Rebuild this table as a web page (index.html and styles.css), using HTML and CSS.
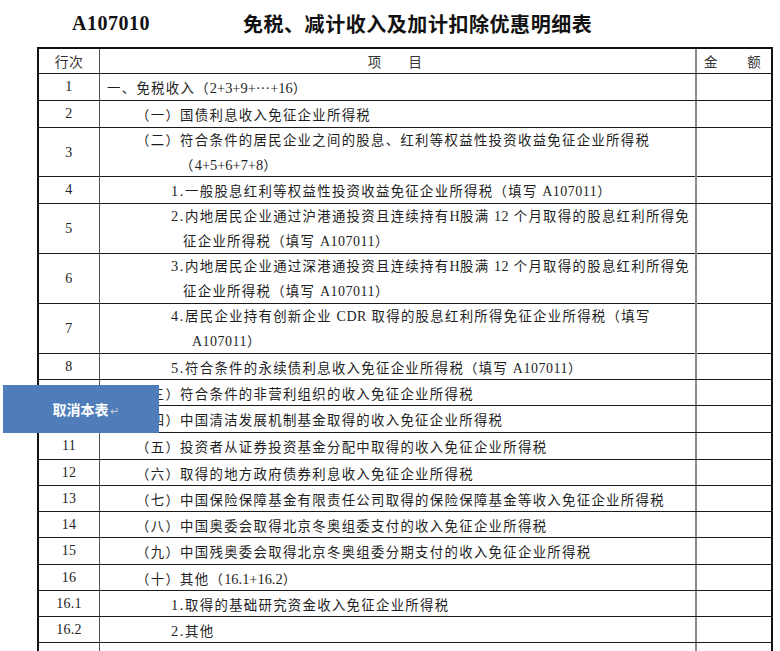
FILE: index.html
```html
<!DOCTYPE html>
<html lang="zh-CN">
<head>
<meta charset="utf-8">
<title>A107010</title>
<link rel="stylesheet" href="styles.css">
</head>
<body>
<div class="page">
  <header class="head">
    <span class="code">A107010</span>
    <h1 class="title">免税、减计收入及加计扣除优惠明细表</h1>
  </header>

  <div class="sheet" role="table">
    <div class="row hd h25" role="row">
      <div class="cell no">行次</div>
      <div class="cell item-h"><span>项</span><span>目</span></div>
      <div class="cell amt-h"><span>金</span><span>额</span></div>
    </div>
    <div class="row h27"><div class="cell no">1</div><div class="cell item l1"><span>一、免税收入（<span class="n">2+3+9+···+16</span>）</span></div><div class="cell amt"></div></div>
    <div class="row h27"><div class="cell no">2</div><div class="cell item l2"><span>（一）国债利息收入免征企业所得税</span></div><div class="cell amt"></div></div>
    <div class="row h49"><div class="cell no">3</div><div class="cell item l2 two"><span>（二）符合条件的居民企业之间的股息、红利等权益性投资收益免征企业所得税</span><span class="c3">（<span class="n">4+5+6+7+8</span>）</span></div><div class="cell amt"></div></div>
    <div class="row h27"><div class="cell no">4</div><div class="cell item l3"><span><span class="k">1.</span>一般股息红利等权益性投资收益免征企业所得税（填写 <span class="a">A107011</span>）</span></div><div class="cell amt"></div></div>
    <div class="row h50"><div class="cell no">5</div><div class="cell item l3 two"><span><span class="k">2.</span>内地居民企业通过沪港通投资且连续持有<span class="a">H</span>股满 <span class="a">12</span> 个月取得的股息红利所得免</span><span class="c5">征企业所得税（填写 <span class="a">A107011</span>）</span></div><div class="cell amt"></div></div>
    <div class="row h50"><div class="cell no">6</div><div class="cell item l3 two"><span><span class="k">3.</span>内地居民企业通过深港通投资且连续持有<span class="a">H</span>股满 <span class="a">12</span> 个月取得的股息红利所得免</span><span class="c5">征企业所得税（填写 <span class="a">A107011</span>）</span></div><div class="cell amt"></div></div>
    <div class="row h50"><div class="cell no">7</div><div class="cell item l3 two"><span><span class="k">4.</span>居民企业持有创新企业 <span class="a">CDR</span> 取得的股息红利所得免征企业所得税（填写</span><span class="c7"><span class="a">A107011</span>）</span></div><div class="cell amt"></div></div>
    <div class="row h26"><div class="cell no">8</div><div class="cell item l3"><span><span class="k">5.</span>符合条件的永续债利息收入免征企业所得税（填写 <span class="a">A107011</span>）</span></div><div class="cell amt"></div></div>
    <div class="row h26"><div class="cell no">9</div><div class="cell item l2"><span>（三）符合条件的非营利组织的收入免征企业所得税</span></div><div class="cell amt"></div></div>
    <div class="row h27"><div class="cell no">10</div><div class="cell item l2"><span>（四）中国清洁发展机制基金取得的收入免征企业所得税</span></div><div class="cell amt"></div></div>
    <div class="row h27"><div class="cell no">11</div><div class="cell item l2"><span>（五）投资者从证券投资基金分配中取得的收入免征企业所得税</span></div><div class="cell amt"></div></div>
    <div class="row h26"><div class="cell no">12</div><div class="cell item l2"><span>（六）取得的地方政府债券利息收入免征企业所得税</span></div><div class="cell amt"></div></div>
    <div class="row h26"><div class="cell no">13</div><div class="cell item l2"><span>（七）中国保险保障基金有限责任公司取得的保险保障基金等收入免征企业所得税</span></div><div class="cell amt"></div></div>
    <div class="row h26"><div class="cell no">14</div><div class="cell item l2"><span>（八）中国奥委会取得北京冬奥组委支付的收入免征企业所得税</span></div><div class="cell amt"></div></div>
    <div class="row h27"><div class="cell no">15</div><div class="cell item l2"><span>（九）中国残奥委会取得北京冬奥组委分期支付的收入免征企业所得税</span></div><div class="cell amt"></div></div>
    <div class="row h26"><div class="cell no">16</div><div class="cell item l2"><span>（十）其他（<span class="n">16.1+16.2</span>）</span></div><div class="cell amt"></div></div>
    <div class="row h26"><div class="cell no">16.1</div><div class="cell item l3"><span><span class="k">1.</span>取得的基础研究资金收入免征企业所得税</span></div><div class="cell amt"></div></div>
    <div class="row h26"><div class="cell no">16.2</div><div class="cell item l3"><span><span class="k">2.</span>其他</span></div><div class="cell amt"></div></div>
    <div class="row h26"><div class="cell no"></div><div class="cell item"></div><div class="cell amt"></div></div>
  </div>

  <button class="cancel" type="button">取消本表<span class="mark">↵</span></button>
</div>
</body>
</html>
```

FILE: styles.css
```css
html, body {
  margin: 0;
  padding: 0;
  background: #ffffff;
}

body {
  font-family: "Liberation Serif", "Noto Sans CJK SC", serif;
  color: #1e1e1e;
  overflow: hidden;
}

.page {
  position: relative;
  width: 780px;
  height: 651px;
  overflow: hidden;
}

.head {
  height: 47px;
  display: flex;
  align-items: center;
  padding-left: 72px;
  box-sizing: border-box;
}

.code {
  font-family: "Liberation Serif", serif;
  font-weight: bold;
  font-size: 20px;
  letter-spacing: 0.5px;
  color: #111;
}

.title {
  margin: 0 0 0 93px;
  font-family: "Noto Sans CJK SC", sans-serif;
  font-weight: bold;
  font-size: 20px;
  letter-spacing: 0.55px;
  color: #111;
}

.sheet {
  margin-left: 37px;
  width: 736px;
  box-sizing: border-box;
  border-top: 2px solid #111;
  border-left: 2px solid #111;
  border-right: 2px solid #111;
  font-size: 13.4px;
  letter-spacing: 1.3px;
}

.row {
  display: grid;
  grid-template-columns: 61px 597px 1fr;
  box-sizing: border-box;
  border-bottom: 1px solid #1a1a1a;
}

.h25 { height: 25px; }
.h26 { height: 26px; }
.h27 { height: 27px; }
.h49 { height: 49px; }
.h50 { height: 50px; }

.cell {
  display: flex;
  align-items: center;
  box-sizing: border-box;
  white-space: nowrap;
  min-width: 0;
}

.no {
  justify-content: center;
  border-right: 1px solid #555;
  font-size: 14px;
  letter-spacing: 0.3px;
  color: #222;
}

.item,
.item-h {
  border-right: 2px solid #8a8a8a;
}

.hd .cell {
  color: #333;
}

.item-h {
  justify-content: center;
  gap: 26px;
  padding-right: 4px;
}

.amt-h {
  justify-content: space-between;
  padding: 0 9px 0 7px;
}

.l1 { padding-left: 7px; }
.l2 { padding-left: 36px; }
.l3 { padding-left: 71px; }

.two {
  flex-direction: column;
  align-items: flex-start;
  justify-content: center;
  line-height: 25px;
}

.c3 { margin-left: 44px; }
.c5 { margin-left: 12px; }
.c7 { margin-left: 21px; }

.n {
  font-size: 14.4px;
  letter-spacing: 0;
}

.k {
  font-size: 14.4px;
  letter-spacing: 1.6px;
}

.a {
  font-size: 14px;
  letter-spacing: 0.5px;
}

.cancel {
  position: absolute;
  left: 3px;
  top: 385px;
  width: 156px;
  height: 48px;
  border: none;
  margin: 0;
  padding: 0;
  background: #4e7dba;
  color: #ffffff;
  font-family: "Noto Sans CJK SC", sans-serif;
  font-weight: bold;
  font-size: 14px;
  cursor: pointer;
}

.mark {
  display: inline-block;
  width: 0;
  color: #c9ced6;
  font-weight: normal;
  font-size: 11px;
  margin-left: 1px;
}
```
